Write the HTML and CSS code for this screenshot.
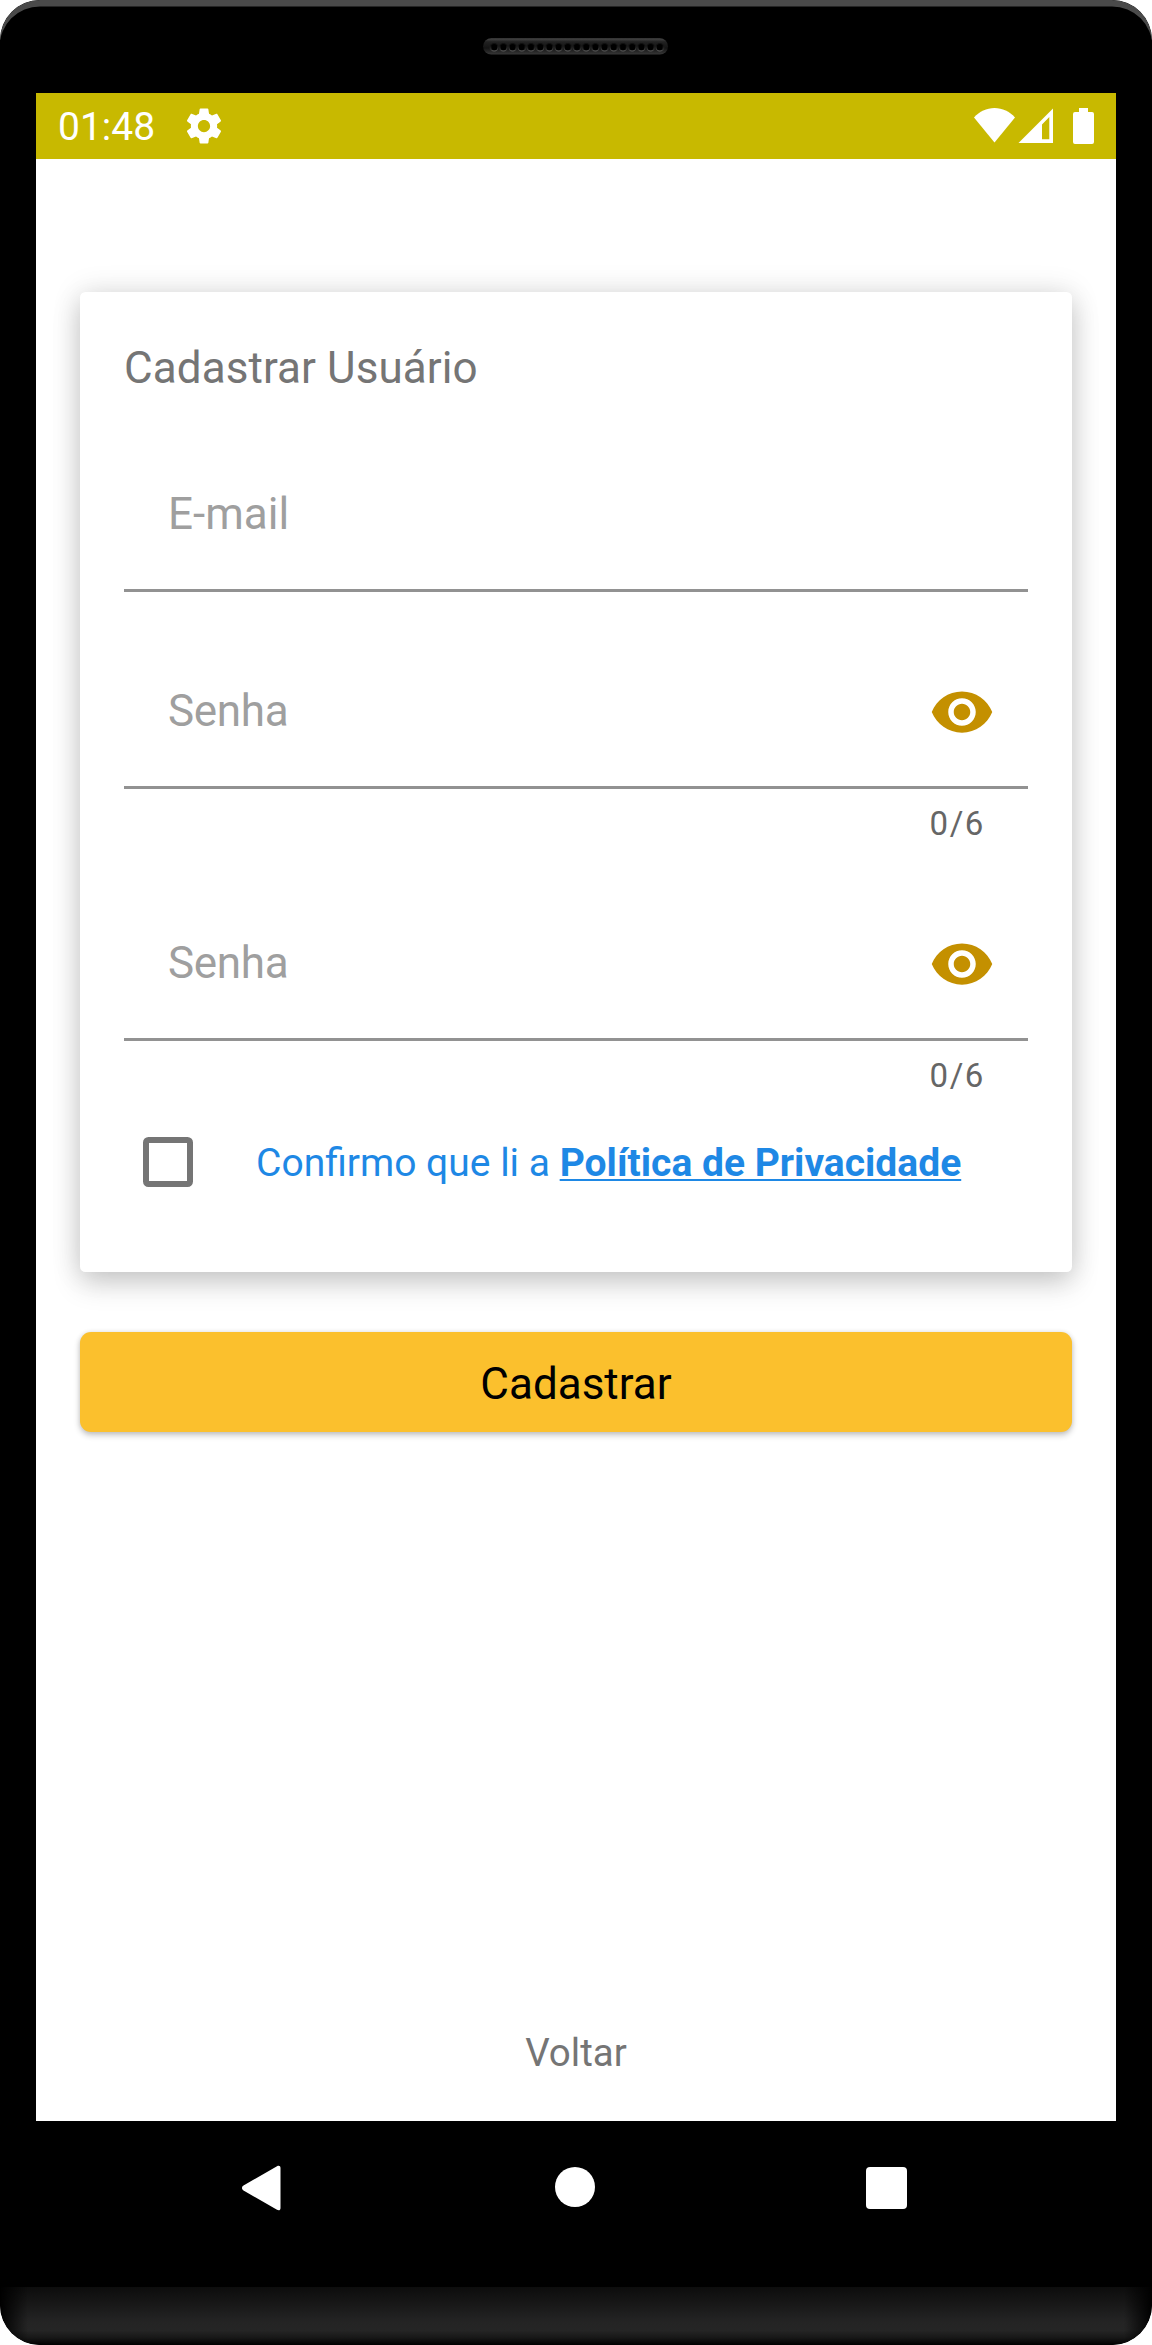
FILE: index.html
```html
<!DOCTYPE html>
<html lang="pt-BR">
<head>
<meta charset="utf-8">
<title>Cadastrar Usuário</title>
<link rel="stylesheet" href="styles.css">
</head>
<body>
<div class="phone">
  <div class="bezel-top">
    <svg class="speaker" width="186" height="17" viewBox="0 0 186 17">
      <defs>
        <linearGradient id="grille" x1="0" y1="0" x2="0" y2="1">
          <stop offset="0" stop-color="#4a4a4a"/><stop offset=".22" stop-color="#222"/><stop offset=".6" stop-color="#141414"/><stop offset="1" stop-color="#383838"/>
        </linearGradient>
        <linearGradient id="rim" x1="0" y1="0" x2="0" y2="1">
          <stop offset=".3" stop-color="#111"/><stop offset="1" stop-color="#606060"/>
        </linearGradient>
        <pattern id="hole" x="6.6" y="5" width="9.2" height="9" patternUnits="userSpaceOnUse">
          <circle cx="4.6" cy="4.2" r="3.7" fill="#000" stroke="url(#rim)" stroke-width="1"/>
        </pattern>
      </defs>
      <rect x=".1" y=".2" width="184.900" height="16.400" rx="8.200" fill="url(#grille)"/>
      <rect x="6.600" y="5" width="174.800" height="9" fill="url(#hole)"/>
    </svg>
  </div>
  <div class="screen">
    <header class="status">
      <span class="clock">01:48</span>
      <svg class="gear" width="42" height="42" viewBox="0 0 24 24"><path fill="#fff" d="M19.430 12.980c.04-.32.07-.64.07-.98s-.03-.66-.07-.98l2.110-1.650c.19-.15.24-.42.12-.64l-2-3.460c-.12-.22-.39-.3-.61-.22l-2.490 1c-.52-.4-1.080-.73-1.690-.98l-.38-2.650C14.460 2.180 14.250 2 14 2h-4c-.25 0-.46.18-.49.42l-.38 2.650c-.61.25-1.170.59-1.690.98l-2.490-1c-.23-.09-.49 0-.61.22l-2 3.460c-.13.22-.07.49.12.64l2.110 1.650c-.04.32-.07.65-.07.98s.03.66.07.98l-2.110 1.650c-.19.15-.24.42-.12.64l2 3.460c.12.22.39.3.61.22l2.490-1c.52.4 1.080.73 1.690.98l.38 2.650c.03.24.24.42.49.42h4c.25 0 .46-.18.49-.42l.38-2.650c.61-.25 1.170-.59 1.690-.98l2.490 1c.23.09.49 0 .61-.22l2-3.460c.12-.22.07-.49-.12-.64l-2.110-1.650zM12 15.500c-1.930 0-3.500-1.570-3.500-3.500s1.570-3.500 3.500-3.500 3.500 1.570 3.500 3.500-1.570 3.500-3.500 3.500z"/></svg>
      <svg class="signals" width="120" height="36" viewBox="0 0 120 36">
        <path fill="#fff" d="M0 9.500C5.500 3.500 12.500 0 20.500 0S35.500 3.500 41 9.500L20.500 34.500z"/>
        <path fill="#fff" fill-rule="evenodd" d="M44.500 35 79 .5V35zM68 16.500V31.300h7.300V9z"/>
        <path fill="#fff" d="M105 0h9v4h4a2 2 0 0 1 2 2v28a2 2 0 0 1-2 2h-17a2 2 0 0 1-2-2V6a2 2 0 0 1 2-2h4z"/>
      </svg>
    </header>
    <main class="content">
      <section class="card">
        <h1 class="title">Cadastrar Usuário</h1>
        <div class="field"><span class="hint">E-mail</span></div>
        <div class="field field-gap"><span class="hint hint-tight">Senha</span>
          <svg class="eye" width="66" height="66" viewBox="0 0 24 24"><path fill="#c49000" d="M12 4.500C7 4.500 2.730 7.610 1 12c1.730 4.390 6 7.500 11 7.500s9.270-3.110 11-7.500c-1.730-4.390-6-7.500-11-7.500zM12 17c-2.760 0-5-2.240-5-5s2.240-5 5-5 5 2.240 5 5-2.240 5-5 5zm0-8c-1.660 0-3 1.340-3 3s1.340 3 3 3 3-1.340 3-3-1.340-3-3-3z"/></svg></div>
        <div class="counter">0/6</div>
        <div class="field"><span class="hint hint-tight">Senha</span>
          <svg class="eye" width="66" height="66" viewBox="0 0 24 24"><path fill="#c49000" d="M12 4.500C7 4.500 2.730 7.610 1 12c1.730 4.390 6 7.500 11 7.500s9.270-3.110 11-7.500c-1.730-4.390-6-7.500-11-7.500zM12 17c-2.760 0-5-2.240-5-5s2.240-5 5-5 5 2.240 5 5-2.240 5-5 5zm0-8c-1.660 0-3 1.340-3 3s1.340 3 3 3 3-1.340 3-3-1.340-3-3-3z"/></svg></div>
        <div class="counter">0/6</div>
        <div class="consent"><span class="box"></span><span class="consent-text">Confirmo que li a <b class="policy">Política de Privacidade</b></span></div>
      </section>
      <div class="submit">Cadastrar</div>
      <div class="back">Voltar</div>
    </main>
  </div>
  <nav class="nav">
    <svg width="39" height="46" viewBox="0 0 39 46"><path fill="#fff" d="M1.500 20.600 35 1.200c2-1.100 3.500-.3 3.500 1.800v40c0 2.100-1.500 2.900-3.500 1.800L1.500 25.400c-2-1.200-2-3.600 0-4.800z"/></svg>
    <span class="home"></span>
    <span class="recent"></span>
  </nav>
  <div class="chin"></div>
</div>
</body>
</html>
```
FILE: styles.css
```css
* { box-sizing: border-box; }
body { margin: 0; background: #fff; font-family: Roboto, sans-serif; }
svg { display: block; flex: none; }
.phone {
  width: 1152px; height: 2345px; background: #000;
  border-radius: 40px; overflow: hidden;
  display: flex; flex-direction: column;
}
.bezel-top {
  height: 93px; display: flex; justify-content: center; padding-top: 38px;
  border-radius: 40px 40px 0 0;
  box-shadow: inset 0 7px 0 -0.5px #4a4a4a;
}
.screen {
  height: 2028px; margin: 0 36px; background: #fff;
  display: flex; flex-direction: column; overflow: hidden;
}
.status { height: 66px; background: #c8b900; display: flex; align-items: center; padding: 0 22px; flex: none; }
.clock { color: #fff; font-size: 39px; line-height: 66px; padding-top: 2px; width: 125px; }
.signals { margin-left: auto; }
.content { flex: 1; padding: 133px 44px 0; display: flex; flex-direction: column; }
.card {
  height: 980px; padding: 44px; border-radius: 5.500px; background: #fff;
  box-shadow: 0 12px 28px rgba(0,0,0,.17), 0 0 30px rgba(0,0,0,.12);
}
.title { margin: 0; font-size: 44px; font-weight: 400; line-height: 64px; letter-spacing: .08px; color: #757575; }
.field {
  height: 154px; border-bottom: 3px solid #929292; margin-top: 38px;
  display: flex; align-items: center; justify-content: space-between; padding: 0 33px 0 44px;
}
.field-gap { margin-top: 43px; }
.hint { font-size: 44px; color: #9f9f9f; }
.hint-tight { letter-spacing: -.3px; }
.eye { margin-top: 2px; }
.counter { height: 60px; padding: 15px 43px 0 0; text-align: right; font-size: 33px; line-height: 40px; letter-spacing: 1.600px; color: #666; }
.consent { display: flex; align-items: center; height: 88px; padding-left: 19px; margin-top: 17px; }
.box { width: 50px; height: 50px; border: 6px solid #757575; border-radius: 5.500px; margin-right: 63px; }
.consent-text { font-size: 39px; padding-top: 2px; color: #1e88e5; white-space: nowrap; }
.policy { font-weight: 700; text-decoration: underline; text-decoration-thickness: 2px; text-underline-offset: 3px; text-decoration-skip-ink: none; }
.submit {
  height: 100px; margin-top: 60px; border-radius: 11px; background: #fbc02d;
  color: #000; font-size: 44px; line-height: 105px; text-align: center;
  box-shadow: 0 3px 6px rgba(0,0,0,.24), 0 0 5px rgba(0,0,0,.08);
}
.back { margin: auto 0 43px; text-align: center; color: #757575; font-size: 38.5px; line-height: 50px; }
.nav { height: 166px; display: flex; padding: 44px 245px 0 242px; justify-content: space-between; }
.home { width: 40px; height: 40px; border-radius: 50%; background: #fff; margin: 2px 0 0 3px; }
.recent { width: 41px; height: 42px; border-radius: 4px; background: #fff; margin-top: 2px; }
.chin {
  height: 58px; border-radius: 0 0 40px 40px;
  background: linear-gradient(90deg, #000 0, transparent 28px, transparent 1124px, #000 1152px),
    linear-gradient(#0d0d0d 0, #141414 20%, #242424 60%, #252525 75%, #181818 87%, #000 100%);
}
```
